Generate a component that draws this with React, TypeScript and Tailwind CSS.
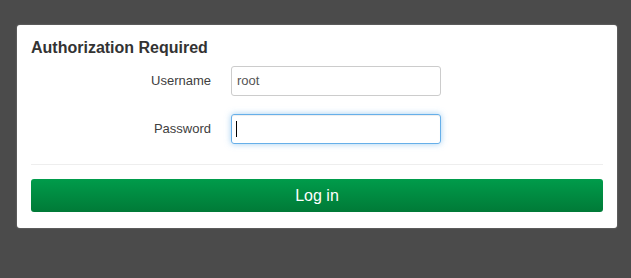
import React from "react";

export default function App() {
  return (
    <div
      className="w-[631px] h-[278px] bg-[#4b4b4b] pt-[25px] pl-[17px]"
      style={{ fontFamily: '"Liberation Sans", Arial, sans-serif' }}
    >
      <div className="w-[600px] h-[203px] bg-white rounded-[3px] shadow-[0_0_2px_rgba(255,255,255,0.35)] pt-[14px] px-[14px] pb-[16px]">
        <div className="text-[16px] leading-[18px] font-bold text-[#333]">
          Authorization Required
        </div>
        <div className="mt-[9px] flex flex-col gap-[18px]">
          <div className="flex items-center gap-[20px]">
            <div className="w-[180px] text-right text-[13px] text-[#404040]">Username</div>
            <div className="w-[210px] h-[30px] border border-[#ccc] rounded-[3px] flex items-center pl-[5px] text-[13px] text-[#555]">
              root
            </div>
          </div>
          <div className="flex items-center gap-[20px]">
            <div className="w-[180px] text-right text-[13px] text-[#404040]">Password</div>
            <div className="w-[210px] h-[30px] border border-[#66afe9] rounded-[3px] flex items-center pl-[4px] shadow-[inset_0_1px_1px_rgba(0,0,0,0.075),0_0_6px_rgba(102,175,233,0.6)]">
              <span className="block w-px h-[16px] bg-black" />
            </div>
          </div>
        </div>
        <div className="mt-[20px] h-px bg-[#eee]" />
        <div className="mt-[14px] h-[33px] rounded-[3px] bg-gradient-to-b from-[#009c4b] to-[#007a37] flex items-center justify-center text-white text-[16px]">
          Log in
        </div>
      </div>
    </div>
  );
}
